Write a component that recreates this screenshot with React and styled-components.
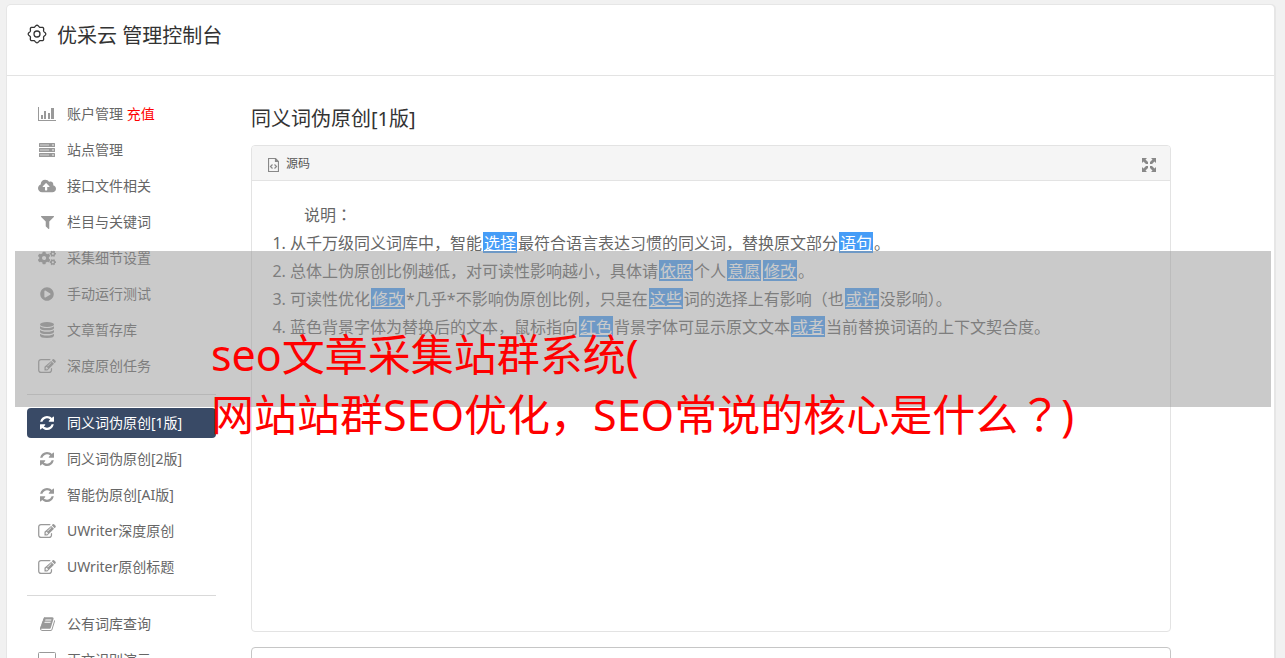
import React from "react";
import styled, { createGlobalStyle } from "styled-components";
import { FaCogs, FaPlayCircle, FaCloudUploadAlt } from "react-icons/fa";

const GlobalStyle = createGlobalStyle`
  *, *::before, *::after { box-sizing: border-box; }
  body {
    margin: 0;
    background: #f1f1f1;
    color: #666;
    font-family: "Noto Sans", "Noto Sans CJK SC", sans-serif;
    font-size: 14px;
  }
`;

const Page = styled.div`
  position: relative;
  height: 100vh;
  overflow: hidden;
  padding: 5px 11px 0 7px;
`;

const Card = styled.div`
  min-height: 100%;
  background: #fff;
  border-radius: 4px;
  box-shadow: 0 0 0 1px #e6e6e6, 1px 0 0 1px #e6e6e6;
`;

const Header = styled.header`
  display: flex;
  align-items: flex-start;
  gap: 10px;
  height: 71px;
  padding: 16px 20px 0;
  border-bottom: 1px solid #e3e3e3;
  color: #333;
  svg { margin-top: 3px; }
`;

const Brand = styled.h1`
  margin: 0;
  font-size: 20px;
  font-weight: 400;
  line-height: 30px;
`;

const Columns = styled.div`
  display: grid;
  grid-template-columns: 189px minmax(0, 920px);
  column-gap: 35px;
  padding: 23px 20px 0;
`;

const Nav = styled.nav`
  display: flex;
  flex-direction: column;
`;

const NavGroup = styled.ul`
  display: flex;
  flex-direction: column;
  gap: 6px;
  margin: 0;
  padding: 0;
  list-style: none;
  & + & {
    margin-top: 13px;
    padding-top: 13px;
    border-top: 1px solid #d9d9d9;
  }
`;

const NavLink = styled.a`
  display: flex;
  align-items: center;
  gap: 10px;
  height: 30px;
  padding: 0 10px;
  border-radius: 4px;
  background: ${(p) => (p.$active ? "#394a66" : "transparent")};
  color: ${(p) => (p.$active ? "#fff" : "#666")};
  line-height: 30px;
  text-decoration: none;
  white-space: nowrap;
`;

const NavIcon = styled.span`
  display: flex;
  flex: none;
  justify-content: center;
  width: 20px;
  color: ${(p) => (p.$active ? "#fff" : "#999")};
`;

const Recharge = styled.span`
  color: #f00;
`;

const Main = styled.main`
  padding-top: 5px;
`;

const Title = styled.h2`
  margin: 0 0 11px;
  color: #333;
  font-size: 20px;
  font-weight: 400;
  line-height: 30px;
`;

const Panel = styled.section`
  border: 1px solid #e3e3e3;
  border-radius: 4px;
`;

const Toolbar = styled.div`
  display: flex;
  align-items: center;
  justify-content: space-between;
  height: 35px;
  padding: 0 14px 0 16px;
  border-bottom: 1px solid #e3e3e3;
  border-radius: 3px 3px 0 0;
  background: #f5f5f5;
`;

const ToolButton = styled.button`
  display: flex;
  align-items: center;
  gap: 7px;
  height: 28px;
  padding: 0;
  border: 0;
  background: none;
  color: #555;
  font: inherit;
  font-size: 12px;
  svg { color: #888; margin-top: 3px; }
`;

const Article = styled.div`
  min-height: 450px;
  padding: 20px;
  font-size: 16px;
  line-height: 28px;
`;

const Lead = styled.p`
  margin: 0;
  text-indent: 2em;
`;

const Notes = styled.ol`
  margin: 0;
  padding-left: 18px;
`;

const Word = styled.a`
  display: inline-block;
  height: 21px;
  margin: 0 1px;
  padding: 0 1px;
  background: #469df7;
  color: #fff;
  line-height: 23px;
  text-decoration: underline;
`;

/* Full-width marks set in the middle of their square */
const Mark = styled.span`
  font-family: "Noto Sans CJK JP", sans-serif;
  line-height: 1;
`;

const Result = styled.textarea`
  display: block;
  width: 100%;
  height: 200px;
  margin-top: 15px;
  padding: 12px 20px;
  border: 1px solid #c6c6c6;
  border-radius: 4px;
  background: #fff;
  resize: none;
`;

const Band = styled.div`
  position: absolute;
  top: 251px;
  left: 15px;
  right: 14px;
  height: 156px;
  padding: 74px 0 0 196px;
  background: rgba(150, 150, 150, 0.5);
  pointer-events: none;
`;

const Caption = styled.p`
  margin: 0;
  color: #f00;
  font-size: 43px;
  line-height: 60px;
  white-space: nowrap;
`;

const gearOutline = Array.from({ length: 96 }, (_, i) => {
  const a = (i / 96) * Math.PI * 2;
  const r = 8 + 0.8 * Math.cos(8 * a);
  return `${(10 + r * Math.sin(a)).toFixed(2)} ${(10 - r * Math.cos(a)).toFixed(2)}`;
}).join("L");

const Gear = () => (
  <svg width="20" height="20" viewBox="0 0 20 20" fill="none" stroke="currentColor" strokeWidth="1.300" aria-hidden="true">
    <path d={`M${gearOutline}Z`} />
    <circle cx="10" cy="10" r="3" />
  </svg>
);

const BarChart = () => (
  <svg width="18" height="14" viewBox="0 0 18 14" fill="currentColor" aria-hidden="true">
    <path d="M0 0h1v13h17v1H0zM3 8h2v4H3zM6 4h2v8H6zM10 6h2v6h-2zM13 1h3v11h-3z" />
  </svg>
);

const Servers = () => (
  <svg width="16" height="14" viewBox="0 0 16 14" aria-hidden="true">
    {[0, 5, 10].map((y) => (
      <g key={y}>
        <rect y={y} width="16" height="4" rx=".5" fill="currentColor" />
        <path d={`M1 ${y + 2}h9`} stroke="#fff" strokeOpacity=".6" />
        <circle cx="14" cy={y + 2} r=".8" fill="#fff" />
      </g>
    ))}
  </svg>
);

const Funnel = () => (
  <svg width="13" height="13" viewBox="0 0 1408 1408" fill="currentColor" aria-hidden="true">
    <path d="M1403 39q17 41-14 70L896 602v742q0 42-39 59-13 5-25 5-27 0-45-19l-256-256q-19-19-19-45V602L19 109Q-12 80 5 39 22 0 64 0h1280q42 0 59 39z" />
  </svg>
);

const Discs = () => (
  <svg width="14" height="16" viewBox="0 0 14 16" fill="currentColor" aria-hidden="true">
    <ellipse cx="7" cy="2.5" rx="7" ry="2.5" />
    <path d="M0 4.2q2 1.8 7 1.8t7-1.8V6q0 2.3-7 2.3T0 6zM0 8q2 1.8 7 1.8T14 8v1.8q0 2.3-7 2.3T0 9.800zM0 11.800q2 1.800 7 1.800t7-1.800v1.700Q14 16 7 16t-7-2.500z" />
  </svg>
);

const Pencil = () => (
  <svg width="18" height="14" viewBox="0 0 1792 1408" fill="currentColor" aria-hidden="true">
    <path d="M888 1056l116-116-152-152-116 116v56h96v96h56zm440-720q-16-16-33 1L945 687q-17 17-1 33t33-1l350-350q17-17 1-33zm80 594v190q0 119-84.500 203.500T1120 1408H288q-119 0-203.500-84.500T0 1120V288Q0 169 84.500 84.500T288 0h832q63 0 117 25 15 7 18 23 3 17-9 29l-49 49q-14 14-32 8-23-6-45-6H288q-66 0-113 47t-47 113v832q0 66 47 113t113 47h832q66 0 113-47t47-113V994q0-13 9-22l64-64q15-15 35-7t20 29zm-96-738l288 288-672 672H640V768zm444 132l-92 92-288-288 92-92q28-28 68-28t68 28l152 152q28 28 28 68t-28 68z" />
  </svg>
);

const Refresh = () => (
  <svg width="14" height="14" viewBox="0 128 1536 1536" fill="currentColor" aria-hidden="true">
    <path d="M1511 1056q0 5-1 7-64 268-268 434.500T764 1664q-146 0-282.500-55T238 1452l-129 129q-19 19-45 19t-45-19-19-45v-448q0-26 19-45t45-19h448q26 0 45 19t19 45-19 45l-137 137q71 66 161 102t187 36q134 0 250-65t186-179q11-17 53-117 8-23 30-23h192q13 0 22.500 9.500t9.500 22.500zm25-800v448q0 26-19 45t-45 19h-448q-26 0-45-19t-19-45 19-45l138-138Q969 384 768 384q-134 0-250 65T332 628q-11 17-53 117-8 23-30 23H50q-13 0-22.500-9.500T18 736v-7q65-268 270-434.500T768 128q146 0 284 55.500T1297 340l130-129q19-19 45-19t45 19 19 45z" />
  </svg>
);

const Book = () => (
  <svg width="15" height="14" viewBox="0 128 1664 1536" fill="currentColor" aria-hidden="true">
    <path d="M1639 478q40 57 18 129l-275 906q-19 64-76.500 107.500T1183 1664H260q-77 0-148.500-53.500T12 1479q-24-67-2-127 0-4 3-27t4-37q1-8-3-21.500t-3-19.500q2-11 8-21t16.500-23.500T52 1179q23-38 45-91.500t30-91.500q3-10 .5-30t-.5-28q3-11 17-28t17-23q21-36 42-92t25-90q1-9-2.500-32t.5-28q4-13 22-30.500t22-22.500q19-26 42.500-84.500T340 411q1-8-3-25.500t-2-26.500q2-8 9-18t18-23 17-21q8-12 16.500-30.500t15-35 16-36 19.500-32 26.500-23.500 36-11.500T556 154l-1 3q38-9 51-9h761q74 0 114 56t18 130l-274 906q-36 119-71.500 153.500T1025 1428H156q-27 0-38 15-11 16-1 43 24 70 144 70h923q29 0 56-15.500t35-41.500l300-987q7-22 5-57 38 15 59 43zm-1064 2q-4 13 2 22.500t20 9.500h608q13 0 25.500-9.500T1247 480l21-64q4-13-2-22.500t-20-9.500H638q-13 0-25.500 9.500T596 416zm-83 256q-4 13 2 22.500t20 9.500h608q13 0 25.500-9.500T1164 736l21-64q4-13-2-22.500t-20-9.500H555q-13 0-25.500 9.500T513 672z" />
  </svg>
);

const Monitor = () => (
  <svg width="18" height="16" viewBox="0 0 18 16" fill="none" stroke="currentColor" aria-hidden="true">
    <rect x=".5" y=".5" width="17" height="11" rx="1" />
    <path d="M9 12v3M5 15.500h8" />
  </svg>
);

const FileCode = () => (
  <svg width="11" height="14" viewBox="0 0 11 14" fill="none" stroke="currentColor" strokeWidth="1.200" aria-hidden="true">
    <path d="M.5.5h7l3 3v10H.5zM7.500.5v3h3" />
    <path d="M4.500 6.500l-2 2 2 2M6.500 6.500l2 2-2 2" />
  </svg>
);

const Expand = () => (
  <svg width="14" height="14" viewBox="0 0 14 14" fill="currentColor" aria-hidden="true">
    <path d="M0 0h5L3.500 1.500 6 4v2H4L1.500 3.500 0 5zM14 0v5l-1.500-1.500L10 6H8V4l2.500-2.500L9 0zM0 14V9l1.500 1.500L4 8h2v2l-2.500 2.500L5 14zM14 14H9l1.500-1.500L8 10V8h2l2.500 2.500L14 9z" />
  </svg>
);

const groups = [
  [
    { label: "账户管理", extra: "充值", icon: <BarChart /> },
    { label: "站点管理", icon: <Servers /> },
    { label: "接口文件相关", icon: <FaCloudUploadAlt size={18} /> },
    { label: "栏目与关键词", icon: <Funnel /> },
    { label: "采集细节设置", icon: <FaCogs size={18} /> },
    { label: "手动运行测试", icon: <FaPlayCircle size={14} /> },
    { label: "文章暂存库", icon: <Discs /> },
    { label: "深度原创任务", icon: <Pencil /> },
  ],
  [
    { label: "同义词伪原创[1版]", icon: <Refresh />, active: true },
    { label: "同义词伪原创[2版]", icon: <Refresh /> },
    { label: "智能伪原创[AI版]", icon: <Refresh /> },
    { label: "UWriter深度原创", icon: <Pencil /> },
    { label: "UWriter原创标题", icon: <Pencil /> },
  ],
  [
    { label: "公有词库查询", icon: <Book /> },
    { label: "正文识别演示", icon: <Monitor /> },
  ],
];

const W = ({ children }) => <Word href="#">{children}</Word>;

export default function App() {
  return (
    <Page>
      <GlobalStyle />
      <Card>
        <Header>
          <Gear />
          <Brand>优采云 管理控制台</Brand>
        </Header>
        <Columns>
          <Nav>
            {groups.map((items, i) => (
              <NavGroup key={i}>
                {items.map((item) => (
                  <li key={item.label}>
                    <NavLink href="#" $active={item.active}>
                      <NavIcon $active={item.active}>{item.icon}</NavIcon>
                      <span>
                        {item.label}
                        {item.extra && <Recharge> {item.extra}</Recharge>}
                      </span>
                    </NavLink>
                  </li>
                ))}
              </NavGroup>
            ))}
          </Nav>
          <Main>
            <Title>同义词伪原创[1版]</Title>
            <Panel>
              <Toolbar>
                <ToolButton type="button">
                  <FileCode />
                  源码
                </ToolButton>
                <ToolButton type="button" aria-label="全屏">
                  <Expand />
                </ToolButton>
              </Toolbar>
              <Article>
                <Lead>说明<Mark>：</Mark></Lead>
                <Notes>
                  <li>从千万级同义词库中，智能<W>选择</W>最符合语言表达习惯的同义词，替换原文部分<W>语句</W>。</li>
                  <li>总体上伪原创比例越低，对可读性影响越小，具体请<W>依照</W>个人<W>意愿</W><W>修改</W>。</li>
                  <li>可读性优化<W>修改</W>*几乎*不影响伪原创比例，只是在<W>这些</W>词的选择上有影响（也<W>或许</W>没影响）。</li>
                  <li>蓝色背景字体为替换后的文本，鼠标指向<W>红色</W>背景字体可显示原文文本<W>或者</W>当前替换词语的上下文契合度。</li>
                </Notes>
              </Article>
            </Panel>
            <Result aria-label="结果" />
          </Main>
        </Columns>
      </Card>
      <Band>
        <Caption>
          seo文章采集站群系统(
          <br />
          网站站群SEO优化，SEO常说的核心是什么<Mark>？</Mark>)
        </Caption>
      </Band>
    </Page>
  );
}
